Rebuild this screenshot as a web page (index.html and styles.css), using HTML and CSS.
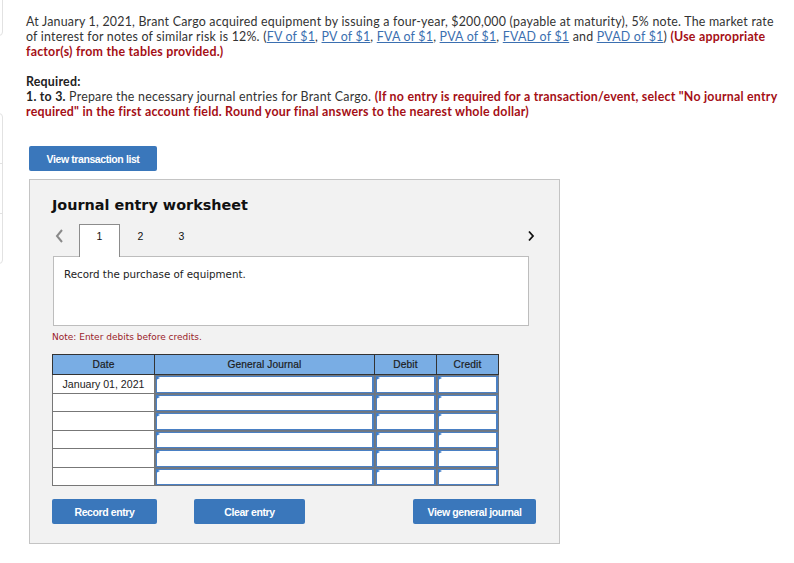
FILE: index.html
```html
<!DOCTYPE html>
<html>
<head>
<meta charset="utf-8">
<link rel="stylesheet" href="styles.css">
</head>
<body>
<div class="page">
  <aside class="side">
    <div class="side-card first"></div>
    <div class="side-card second">
      <div class="side-item"></div>
      <div class="side-item"></div>
      <div class="side-item last"></div>
    </div>
  </aside>
  <main class="main">
    <p class="q">At January 1, 2021, Brant Cargo acquired equipment by issuing a four-year, $200,000 (payable at maturity), 5% note. The market rate of interest for notes of similar risk is 12%. (<a href="#">FV of $1</a>, <a href="#">PV of $1</a>, <a href="#">FVA of $1</a>, <a href="#">PVA of $1</a>, <a href="#">FVAD of $1</a> and <a href="#">PVAD of $1</a>) <b class="red">(Use appropriate factor(s) from the tables provided.)</b></p>
    <p class="q req"><b>Required:</b><br><b>1. to 3.</b> Prepare the necessary journal entries for Brant Cargo. <b class="red">(If no entry is required for a transaction/event, select "No journal entry required" in the first account field. Round your final answers to the nearest whole dollar)</b></p>

    <button class="btn btn-list">View transaction list</button>

    <section class="panel">
      <h2 class="title">Journal entry worksheet</h2>
      <div class="tabs">
        <span class="arrow left">
          <svg width="9" height="14" viewBox="0 0 9 14"><path d="M7 1 L2 7 L7 13" fill="none" stroke="#8a8a8a" stroke-width="2"/></svg>
        </span>
        <span class="tab active">1</span>
        <span class="tab">2</span>
        <span class="tab">3</span>
        <span class="arrow right">
          <svg width="8" height="12" viewBox="0 0 8 12"><path d="M2 1.5 L6 6 L2 10.5" fill="none" stroke="#111" stroke-width="1.8"/></svg>
        </span>
      </div>
      <div class="desc">Record the purchase of equipment.</div>
      <p class="note">Note: Enter debits before credits.</p>

      <table class="jt">
        <thead>
          <tr><th class="c-date">Date</th><th class="c-gj">General Journal</th><th class="c-num">Debit</th><th class="c-num">Credit</th></tr>
        </thead>
        <tbody>
          <tr><td class="dt">January 01, 2021</td><td class="in"><div class="inp"></div></td><td class="in"><div class="inp"></div></td><td class="in"><div class="inp"></div></td></tr>
          <tr><td class="dt"></td><td class="in"><div class="inp"></div></td><td class="in"><div class="inp"></div></td><td class="in"><div class="inp"></div></td></tr>
          <tr><td class="dt"></td><td class="in"><div class="inp"></div></td><td class="in"><div class="inp"></div></td><td class="in"><div class="inp"></div></td></tr>
          <tr><td class="dt"></td><td class="in"><div class="inp"></div></td><td class="in"><div class="inp"></div></td><td class="in"><div class="inp"></div></td></tr>
          <tr><td class="dt"></td><td class="in"><div class="inp"></div></td><td class="in"><div class="inp"></div></td><td class="in"><div class="inp"></div></td></tr>
          <tr><td class="dt"></td><td class="in"><div class="inp"></div></td><td class="in"><div class="inp"></div></td><td class="in"><div class="inp"></div></td></tr>
        </tbody>
      </table>

      <div class="actions">
        <button class="btn btn-record">Record entry</button>
        <button class="btn btn-clear">Clear entry</button>
        <button class="btn btn-view">View general journal</button>
      </div>
    </section>
  </main>
</div>
</body>
</html>
```

FILE: styles.css
```css
html, body {
  margin: 0;
  padding: 0;
  background: #fff;
}
body {
  font-family: "Lato", "Liberation Sans", sans-serif;
  color: #333;
}
.page {
  display: flex;
  align-items: flex-start;
}
.side {
  width: 4px;
  flex: none;
  overflow: hidden;
}
.side-card {
  width: 12px;
  margin-left: -9px;
  border: 1px solid #e2e2e2;
  border-radius: 4px;
  box-sizing: border-box;
}
.side-card.first {
  height: 40px;
  margin-top: -4px;
}
.side-card.second {
  margin-top: 77px;
}
.side-item {
  height: 49px;
  border-bottom: 1px solid #e2e2e2;
}
.side-item.last {
  border-bottom: none;
}
.main {
  padding-left: 22px;
  padding-top: 14px;
  width: 752px;
}
.q {
  margin: 0;
  font-size: 12.4px;
  line-height: 15px;
  letter-spacing: 0.22px;
}
.q a {
  color: #3b6fb0;
  text-decoration: underline;
}
.q b {
  font-weight: 700;
  color: #222;
}
.q b.red {
  color: #a50f16;
}
.req {
  margin-top: 15px;
}
.btn {
  display: inline-flex;
  align-items: center;
  justify-content: center;
  border: none;
  border-radius: 2px;
  background: #3a77bb;
  color: #fff;
  font-family: "Liberation Sans", Arial, sans-serif;
  font-weight: 700;
  font-size: 10.5px;
  letter-spacing: -0.4px;
  height: 25px;
  padding: 0;
  cursor: pointer;
}
.btn-list {
  margin-top: 27px;
  margin-left: 3px;
  width: 128px;
}
.panel {
  margin-top: 8px;
  margin-left: 3px;
  width: 531px;
  height: 365px;
  box-sizing: border-box;
  background: #f2f2f2;
  border: 1px solid #c4c4c4;
  padding: 0 0 0 22px;
}
.title {
  margin: 15px 0 0 0;
  font-family: "DejaVu Sans", Verdana, sans-serif;
  font-size: 14.4px;
  line-height: 20px;
  font-weight: 700;
  color: #111;
}
.tabs {
  display: flex;
  align-items: stretch;
  height: 32px;
  margin-top: 9px;
  width: 483px;
}
.arrow {
  display: flex;
  align-items: flex-start;
  padding-top: 5px;
}
.arrow.left {
  width: 27px;
  padding-left: 3px;
  box-sizing: border-box;
}
.arrow.right {
  margin-left: auto;
  padding-top: 6px;
}
.tab {
  width: 41px;
  box-sizing: border-box;
  display: flex;
  align-items: flex-start;
  justify-content: center;
  padding-top: 6px;
  font-family: "Liberation Sans", Arial, sans-serif;
  font-size: 10.5px;
  color: #111;
}
.tab.active {
  background: #fff;
  border: 1px solid #8c8c8c;
  border-bottom: none;
  padding-top: 5px;
  position: relative;
  z-index: 1;
  margin-bottom: -1px;
}
.desc {
  width: 476px;
  height: 70px;
  box-sizing: border-box;
  margin-left: 1px;
  background: #fff;
  border: 1px solid #bdbdbd;
  padding: 11px 0 0 10px;
  font-family: "DejaVu Sans", Verdana, sans-serif;
  font-size: 10.3px;
  line-height: 13px;
  color: #222;
}
.note {
  margin: 5px 0 0 0;
  font-family: "DejaVu Sans", Verdana, sans-serif;
  font-size: 9px;
  line-height: 12px;
  color: #9a1c2a;
}
.jt {
  margin-top: 11px;
  border-collapse: collapse;
  width: 447px;
  font-family: "Liberation Sans", Arial, sans-serif;
  font-size: 10px;
}
.jt th {
  background: #79ade4;
  border: 1px solid #333;
  height: 19px;
  padding: 0;
  font-weight: 400;
  color: #1c1c1c;
  font-size: 10.2px;
  letter-spacing: 0.1px;
  -webkit-text-stroke: 0.2px #1c1c1c;
}
.c-date { width: 101px; }
.c-gj { width: 219px; }
.c-num { width: 61px; }
.jt td {
  padding: 0;
}
.jt td.dt {
  background: #fff;
  border: 1px solid #777;
  text-align: center;
  color: #222;
  font-size: 10.6px;
  height: 17.5px;
}
.jt td.in {
  border: 1px solid #6f7680;
  background: #6f7a86;
  padding: 1px 0 0 1px;
  vertical-align: top;
}
.inp {
  position: relative;
  background: #fff;
  border: 1px solid #4a80c4;
  border-right-width: 2px;
  box-sizing: border-box;
  height: 16.5px;
}
.inp::before {
  content: "";
  position: absolute;
  left: -1px;
  top: -1px;
  width: 0;
  height: 0;
  border-top: 2.5px solid transparent;
  border-bottom: 2.5px solid transparent;
  border-left: 4px solid #3d7cc9;
}
.actions {
  display: flex;
  margin-top: 13px;
  width: 484px;
}
.btn-record { width: 105px; }
.btn-clear { width: 111px; margin-left: 37px; }
.btn-view { width: 123px; margin-left: auto; }
```
